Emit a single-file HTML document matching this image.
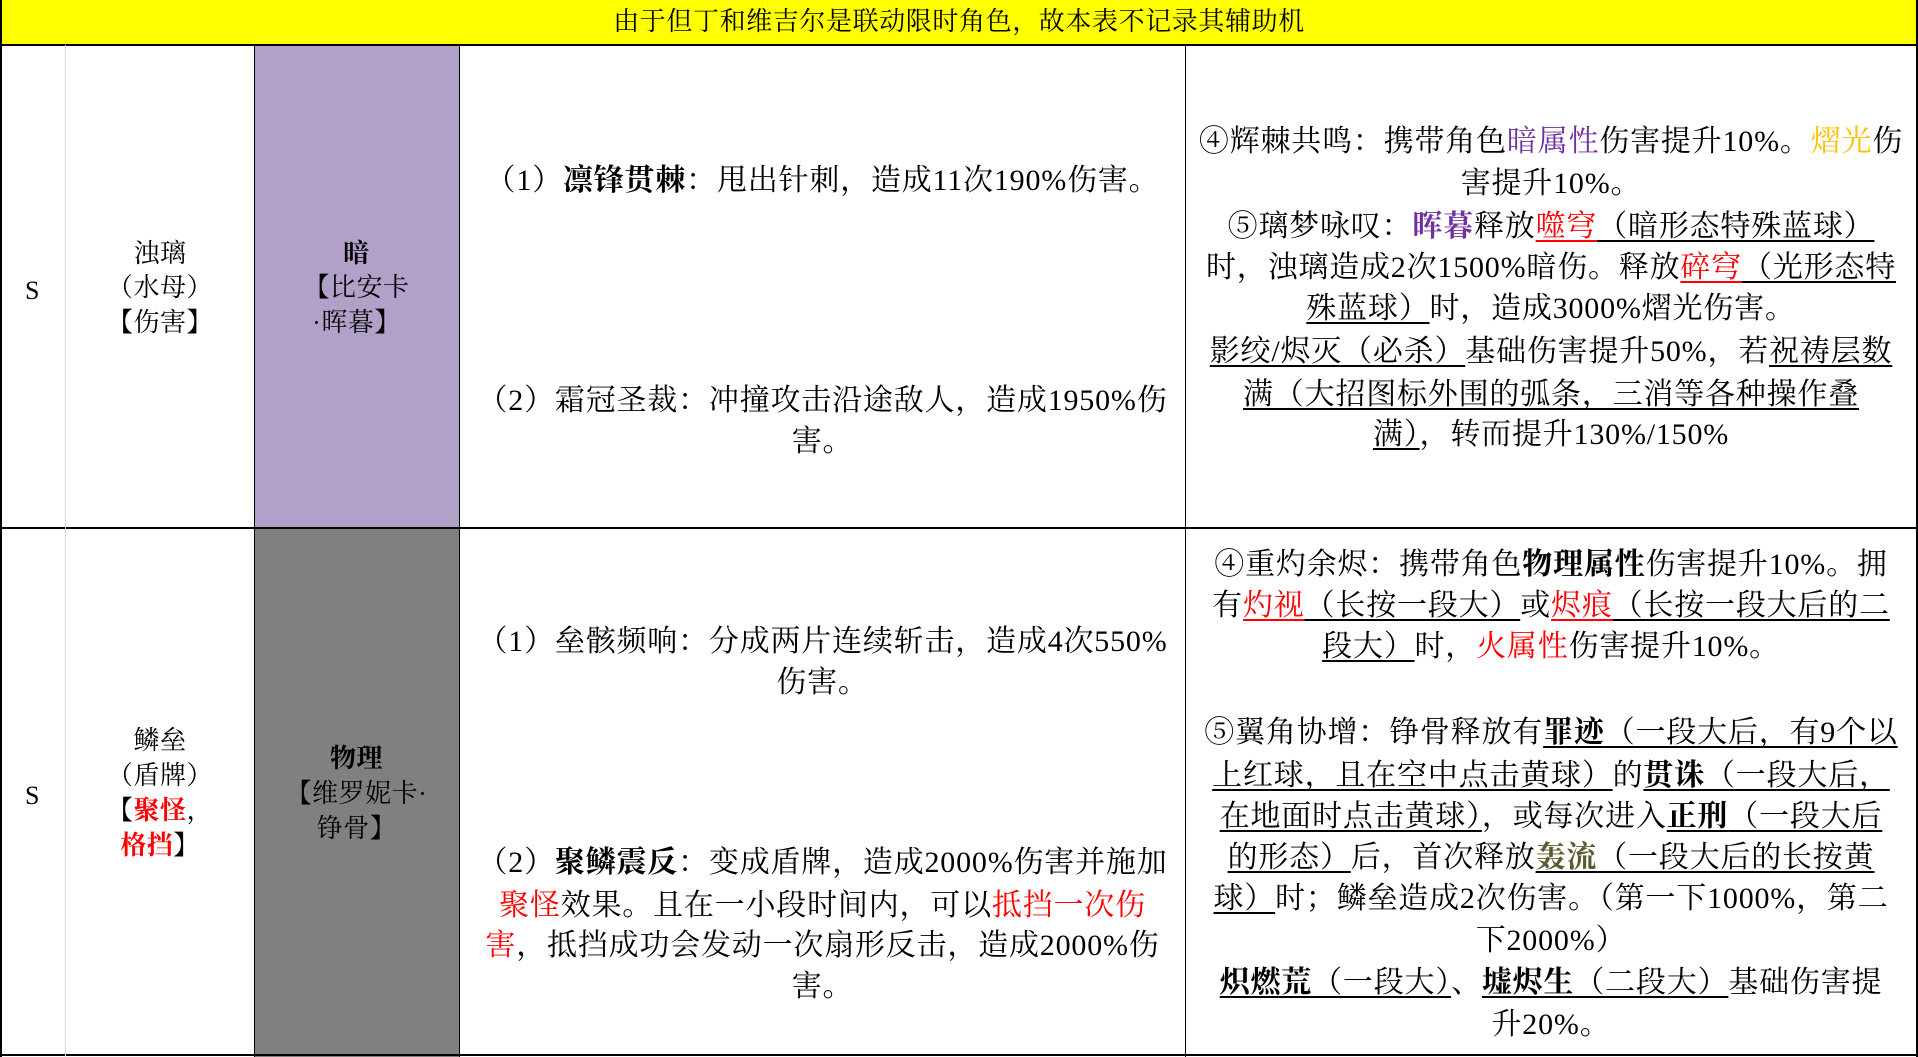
<!DOCTYPE html>
<html><head><meta charset="utf-8"><style>
*{margin:0;padding:0;box-sizing:border-box}
body{width:1918px;height:1057px;background:#fff;position:relative;overflow:hidden;font-family:"Liberation Serif","Noto Serif CJK SC",serif;color:#000}
.b{position:absolute}
.l{position:absolute;white-space:nowrap;text-align:center;font-size:30px;line-height:41px;height:41px;letter-spacing:0.8px}
.s{font-size:26px;line-height:35px;height:35px;letter-spacing:0.5px}
.p{color:#7030a0}.o{color:#ffc000}.r{color:#f00}.g{color:#5c5a30}
u{text-decoration:underline;text-decoration-thickness:2px;text-underline-offset:4px}
b{font-weight:bold}
</style></head><body>
<div class="b" style="left:0;top:0;width:1918px;height:45px;background:#ff0"></div>
<div class="l" style="left:0;width:1918px;top:4px;font-size:26px;line-height:36px;letter-spacing:0.6px">由于但丁和维吉尔是联动限时角色，故本表不记录其辅助机</div>
<div class="b" style="left:254px;top:45px;width:205px;height:483px;background:#b1a0c7"></div>
<div class="b" style="left:254px;top:528px;width:205px;height:529px;background:#808080"></div>
<div class="b" style="left:0;top:44px;width:1918px;height:2px;background:#000"></div>
<div class="b" style="left:0;top:527px;width:1918px;height:2px;background:#000"></div>
<div class="b" style="left:0;top:1054px;width:1918px;height:2px;background:#000"></div>
<div class="b" style="left:0;top:0;width:2px;height:1057px;background:#000"></div>
<div class="b" style="left:1916px;top:0;width:2px;height:1057px;background:#000"></div>
<div class="b" style="left:65px;top:45px;width:1px;height:1012px;background:#d9d9d9"></div>
<div class="b" style="left:254px;top:45px;width:1px;height:1012px;background:#000"></div>
<div class="b" style="left:459px;top:45px;width:1px;height:1012px;background:#000"></div>
<div class="b" style="left:1185px;top:45px;width:1px;height:1012px;background:#000"></div>

<div class="l s" style="left:0;width:65px;top:273px">S</div>
<div class="l s" style="left:66px;width:188px;top:236px">浊璃</div>
<div class="l s" style="left:66px;width:188px;top:270px">（水母）</div>
<div class="l s" style="left:66px;width:188px;top:305px">【伤害】</div>
<div class="l s" style="left:254px;width:205px;top:236px"><b>暗</b></div>
<div class="l s" style="left:254px;width:205px;top:270px">【比安卡</div>
<div class="l s" style="left:254px;width:205px;top:305px">·晖暮】</div>

<div class="l" style="left:460px;width:725px;top:160px">（1）<b>凛锋贯棘</b>：甩出针刺，造成11次190%伤害。</div>
<div class="l" style="left:460px;width:725px;top:380px">（2）霜冠圣裁：冲撞攻击沿途敌人，造成1950%伤</div>
<div class="l" style="left:460px;width:725px;top:421px">害。</div>

<div class="l" style="left:1186px;width:730px;top:121px">④辉棘共鸣：携带角色<span class="p">暗属性</span>伤害提升10%。<span class="o">熠光</span>伤</div>
<div class="l" style="left:1186px;width:730px;top:163px">害提升10%。</div>
<div class="l" style="left:1186px;width:730px;top:206px">⑤璃梦咏叹：<b class="p">晖暮</b>释放<u class="r">噬穹</u><u>（暗形态特殊蓝球）</u></div>
<div class="l" style="left:1186px;width:730px;top:247px">时，浊璃造成2次1500%暗伤。释放<u class="r">碎穹</u><u>（光形态特</u></div>
<div class="l" style="left:1186px;width:730px;top:288px"><u>殊蓝球）</u>时，造成3000%熠光伤害。</div>
<div class="l" style="left:1186px;width:730px;top:331px"><u>影绞/烬灭（必杀）</u>基础伤害提升50%，若<u>祝祷层数</u></div>
<div class="l" style="left:1186px;width:730px;top:374px"><u>满（大招图标外围的弧条，三消等各种操作叠</u></div>
<div class="l" style="left:1186px;width:730px;top:414px"><u>满）</u>，转而提升130%/150%</div>

<div class="l s" style="left:0;width:65px;top:778px">S</div>
<div class="l s" style="left:66px;width:188px;top:723px">鳞垒</div>
<div class="l s" style="left:66px;width:188px;top:758px">（盾牌）</div>
<div class="l s" style="left:66px;width:188px;top:793px">【<b class="r">聚怪</b>，</div>
<div class="l s" style="left:66px;width:188px;top:828px"><b class="r">格挡</b>】</div>
<div class="l s" style="left:254px;width:205px;top:741px"><b>物理</b></div>
<div class="l s" style="left:254px;width:205px;top:776px">【维罗妮卡·</div>
<div class="l s" style="left:254px;width:205px;top:811px">铮骨】</div>

<div class="l" style="left:460px;width:725px;top:621px">（1）垒骸频响：分成两片连续斩击，造成4次550%</div>
<div class="l" style="left:460px;width:725px;top:662px">伤害。</div>
<div class="l" style="left:460px;width:725px;top:842px">（2）<b>聚鳞震反</b>：变成盾牌，造成2000%伤害并施加</div>
<div class="l" style="left:460px;width:725px;top:885px"><span class="r">聚怪</span>效果。且在一小段时间内，可以<span class="r">抵挡一次伤</span></div>
<div class="l" style="left:460px;width:725px;top:925px"><span class="r">害</span>，抵挡成功会发动一次扇形反击，造成2000%伤</div>
<div class="l" style="left:460px;width:725px;top:966px">害。</div>

<div class="l" style="left:1186px;width:730px;top:544px">④重灼余烬：携带角色<b>物理属性</b>伤害提升10%。拥</div>
<div class="l" style="left:1186px;width:730px;top:585px">有<u class="r">灼视</u><u>（长按一段大）</u>或<u class="r">烬痕</u><u>（长按一段大后的二</u></div>
<div class="l" style="left:1186px;width:730px;top:626px"><u>段大）</u>时，<span class="r">火属性</span>伤害提升10%。</div>
<div class="l" style="left:1186px;width:730px;top:712px">⑤翼角协增：铮骨释放有<u><b>罪迹</b>（一段大后，有9个以</u></div>
<div class="l" style="left:1186px;width:730px;top:755px"><u>上红球，且在空中点击黄球）</u>的<u><b>贯诛</b>（一段大后，</u></div>
<div class="l" style="left:1186px;width:730px;top:796px"><u>在地面时点击黄球）</u>，或每次进入<u><b>正刑</b>（一段大后</u></div>
<div class="l" style="left:1186px;width:730px;top:837px"><u>的形态）</u>后，首次释放<u><b class="g">轰流</b>（一段大后的长按黄</u></div>
<div class="l" style="left:1186px;width:730px;top:878px"><u>球）</u>时；鳞垒造成2次伤害。（第一下1000%，第二</div>
<div class="l" style="left:1186px;width:730px;top:920px">下2000%）</div>
<div class="l" style="left:1186px;width:730px;top:962px"><u><b>炽燃荒</b>（一段大）</u>、<u><b>墟烬生</b>（二段大）</u>基础伤害提</div>
<div class="l" style="left:1186px;width:730px;top:1004px">升20%。</div>
</body></html>
